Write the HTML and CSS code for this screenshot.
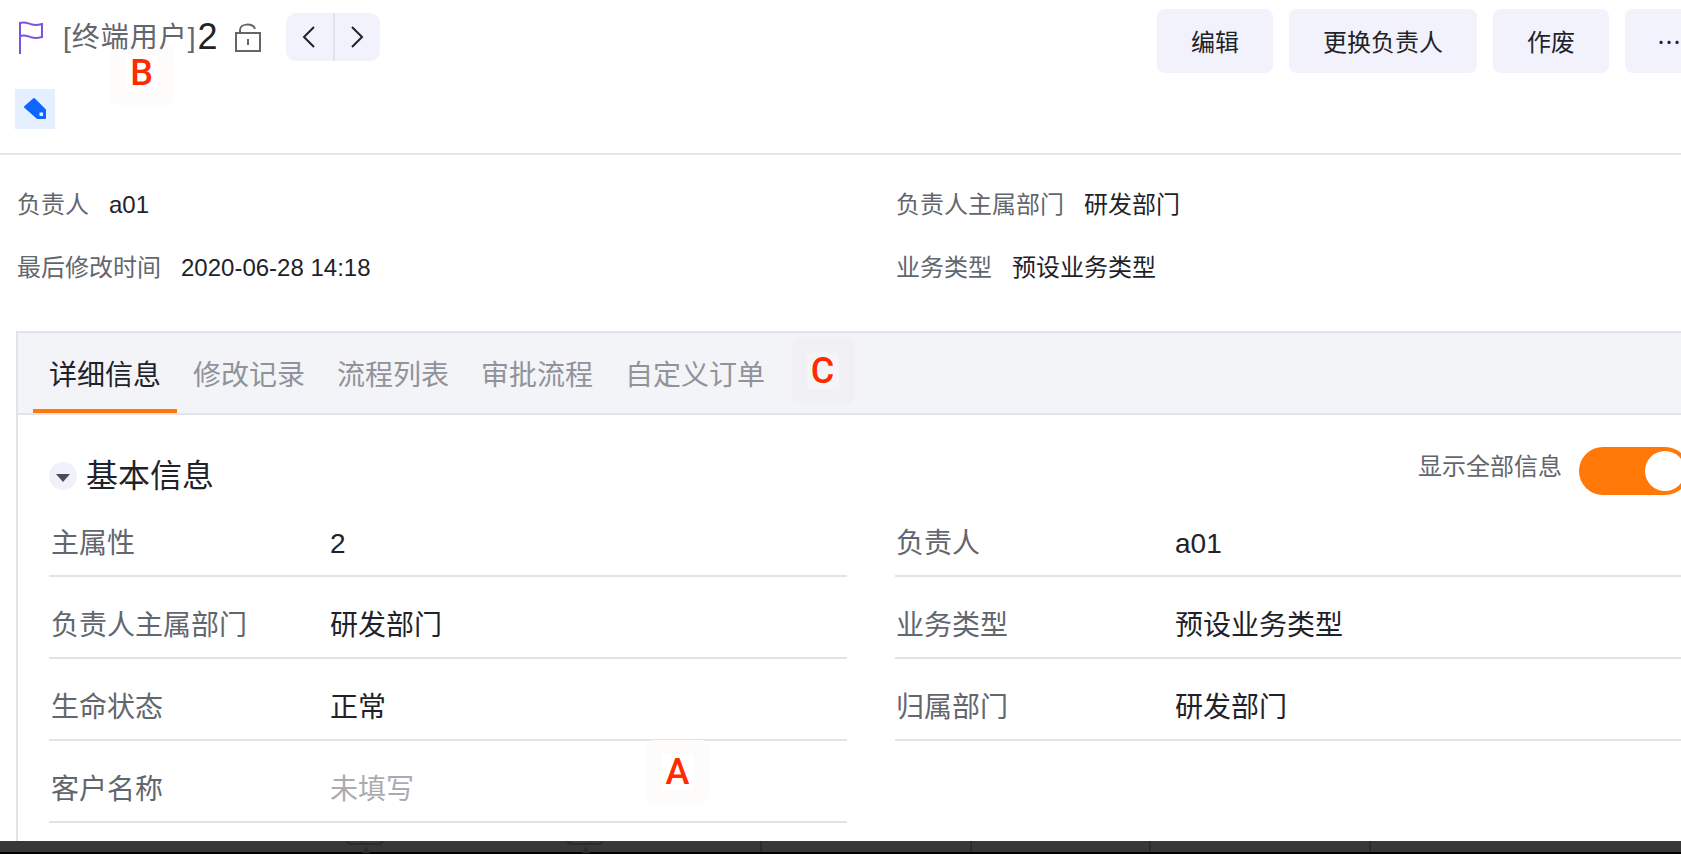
FILE: index.html
```html
<!DOCTYPE html>
<html lang="zh-CN">
  <head>
    <meta charset="UTF-8" />
    <meta name="viewport" content="width=device-width, initial-scale=1.0" />
    <link rel="stylesheet" href="styles.css">
    <title>终端用户</title>
  </head>
  <body>
    <div class="page">
      <div class="main">
        <!-- header -->
        <div class="header">
          <div class="header-left">
            <div class="title-row">
              <svg class="flag" width="26" height="34" viewBox="0 0 26 34" fill="none" stroke="#7b52e0" stroke-width="2">
                <path d="M2 1v32" />
                <path d="M2 2c5-1.500 8 .5 12 1.500 3 .7 6 .5 10-.5v13c-4 1-7 1.200-10 .5-4-1-7-3-12-1.500" />
              </svg>
              <span class="title-text">[终端用户]</span>
              <span class="title-num">2</span>
              <svg class="lock" width="28" height="30" viewBox="0 0 28 30" fill="none" stroke="#62666d" stroke-width="2">
                <rect x="2" y="10" width="24" height="18" />
                <path d="M6 10V7c0-7 13-7 15-1" />
                <path d="M14 16v6" />
              </svg>
              <div class="nav-btns">
                <div class="nav-btn">
                  <svg width="14" height="22" viewBox="0 0 14 22" fill="none" stroke="#1f2329" stroke-width="2"><path d="M12 1 2 11l10 10" /></svg>
                </div>
                <div class="nav-btn nav-btn-next">
                  <svg width="14" height="22" viewBox="0 0 14 22" fill="none" stroke="#1f2329" stroke-width="2"><path d="m2 1 10 10L2 21" /></svg>
                </div>
              </div>
            </div>
            <div class="tag-box">
              <svg width="24" height="24" viewBox="0 0 24 24">
                <path fill="#0d66ff" stroke="#0d66ff" stroke-width="2" stroke-linejoin="round" d="M2 10 11 2l11 11v8h-7.500z" />
                <rect x="16.500" y="15.500" width="3.500" height="3.500" fill="#e5efff" />
              </svg>
            </div>
          </div>
          <div class="actions">
            <button class="btn btn-edit">编辑</button>
            <button class="btn btn-owner">更换负责人</button>
            <button class="btn btn-edit">作废</button>
            <button class="btn btn-more">…</button>
          </div>
        </div>

        <!-- summary -->
        <div class="summary">
          <div class="summary-item"><span class="summary-label">负责人</span><span>a01</span></div>
          <div class="summary-item"><span class="summary-label">负责人主属部门</span><span>研发部门</span></div>
          <div class="summary-item"><span class="summary-label">最后修改时间</span><span>2020-06-28 14:18</span></div>
          <div class="summary-item"><span class="summary-label">业务类型</span><span>预设业务类型</span></div>
        </div>

        <!-- tabs -->
        <div class="panel">
          <div class="tabs">
            <div class="tab active">详细信息</div>
            <div class="tab">修改记录</div>
            <div class="tab">流程列表</div>
            <div class="tab">审批流程</div>
            <div class="tab">自定义订单</div>
          </div>
          <div class="panel-body">
            <div class="section-head">
              <div class="section-title">
                <span class="caret"></span>
                <h3>基本信息</h3>
              </div>
              <div class="show-all">
                <span class="show-all-label">显示全部信息</span>
                <span class="switch"></span>
              </div>
            </div>
            <div class="fields">
              <div class="field"><span class="field-label">主属性</span><span>2</span></div>
              <div class="field"><span class="field-label">负责人</span><span>a01</span></div>
              <div class="field"><span class="field-label">负责人主属部门</span><span>研发部门</span></div>
              <div class="field"><span class="field-label">业务类型</span><span>预设业务类型</span></div>
              <div class="field"><span class="field-label">生命状态</span><span>正常</span></div>
              <div class="field"><span class="field-label">归属部门</span><span>研发部门</span></div>
              <div class="field"><span class="field-label">客户名称</span><span class="empty">未填写</span></div>
            </div>
          </div>
        </div>
      </div>

      <!-- bottom strip -->
      <div class="dock">
        <div class="dock-seg dock-seg-1">
          <span class="dock-mark"></span>
          <span class="dock-mark"></span>
        </div>
        <div class="dock-seg dock-seg-2"></div>
        <div class="dock-seg dock-seg-3"></div>
        <div class="dock-seg dock-seg-4"></div>
      </div>
      <div class="dock-edge"></div>

      <!-- callouts -->
      <div class="callout callout-a"><span>A</span></div>
      <div class="callout callout-b"><span>B</span></div>
      <div class="callout callout-c"><span>C</span></div>
    </div>
  </body>
</html>
```

FILE: styles.css
```css
* {
  box-sizing: border-box;
}
html,
body {
  margin: 0;
  padding: 0;
  background: #fff;
}
body {
  font-family: "Liberation Sans", "Noto Sans CJK SC", sans-serif;
  color: #1f2329;
}
.page {
  position: relative;
  display: flex;
  flex-direction: column;
  width: 1681px;
  height: 854px;
  overflow: hidden;
}
.main {
  height: 841px;
  overflow: hidden;
}

/* Header */
.header {
  display: flex;
  justify-content: space-between;
  width: 1800px;
  height: 155px;
  padding: 9px 0 0 15px;
  border-bottom: 2px solid #e2e4ee;
}
.title-row {
  position: relative;
  z-index: 2;
  display: flex;
  align-items: center;
  height: 48px;
  margin-top: 4px;
}
.flag {
  margin: 2px 0 0 3px;
}
.title-text {
  margin: 2px 0 0 19px;
  font-size: 28px;
  letter-spacing: 1px;
  line-height: 40px;
  color: #62666d;
}
.title-num {
  margin-left: 1px;
  font-size: 36px;
  line-height: 40px;
  color: #1f2329;
}
.lock {
  margin: 1px 0 0 16px;
}
.nav-btns {
  display: flex;
  width: 94px;
  height: 48px;
  margin-left: 24px;
  background: #f1f2fb;
  border-radius: 10px;
}
.nav-btn {
  display: flex;
  align-items: center;
  justify-content: center;
  width: 47px;
  height: 48px;
}
.nav-btn-next {
  border-left: 2px solid #e2e3ea;
}
.tag-box {
  display: flex;
  align-items: center;
  justify-content: center;
  width: 40px;
  height: 40px;
  margin-top: 28px;
  background: #e5efff;
}

/* Buttons */
.actions {
  display: flex;
  gap: 16px;
  position: absolute;
  top: 9px;
  left: 1157px;
}
.btn {
  height: 64px;
  padding: 0 0 2px;
  border: 0;
  border-radius: 8px;
  background: #f1f2fb;
  font-family: inherit;
  font-size: 24px;
  color: #1f2329;
}
.btn-edit {
  width: 116px;
}
.btn-owner {
  width: 188px;
}
.btn-more {
  width: 116px;
  padding-left: 32px;
  font-family: "Noto Sans CJK SC", sans-serif;
  text-align: left;
}

/* Summary */
.summary {
  display: grid;
  grid-template-columns: 879px 1fr;
  align-content: start;
  row-gap: 34px;
  height: 176px;
  padding: 35px 0 0 17px;
}
.summary-item {
  font-size: 24px;
  line-height: 29px;
  white-space: nowrap;
}
.summary-label {
  margin-right: 20px;
  color: #62666d;
}

/* Tabs */
.panel {
  width: 1800px;
  height: 520px;
  margin-left: 16px;
  border-top: 2px solid #e2e3ea;
  border-left: 2px solid #e2e3ea;
}
.tabs {
  display: flex;
  height: 82px;
  padding-left: 15px;
  background: #f3f4f8;
  border-bottom: 2px solid #e2e3ea;
}
.tab {
  width: 144px;
  height: 80px;
  padding-top: 23px;
  font-size: 28px;
  line-height: 40px;
  text-align: center;
  color: #909399;
}
.tab.active {
  color: #1f2329;
  border-bottom: 4px solid #ff7808;
}
.tab:last-child {
  width: 172px;
}

/* Section */
.panel-body {
  padding: 32px 0 0 31px;
}
.section-head {
  display: flex;
  justify-content: space-between;
  width: 1640px;
  height: 48px;
}
.section-title {
  display: flex;
  align-items: center;
  height: 48px;
  margin-top: 5px;
}
.caret {
  display: flex;
  align-items: center;
  justify-content: center;
  width: 28px;
  height: 28px;
  border-radius: 50%;
  background: #f0f1fb;
}
.caret::after {
  content: "";
  margin-top: 4px;
  border-top: 8px solid #4a4d57;
  border-left: 7px solid transparent;
  border-right: 7px solid transparent;
}
h3 {
  margin: 0 0 0 9px;
  font-size: 32px;
  font-weight: 400;
  line-height: 40px;
}
.show-all {
  display: flex;
  align-items: flex-start;
}
.show-all-label {
  font-size: 24px;
  line-height: 40px;
  color: #62666d;
}
.switch {
  position: relative;
  width: 110px;
  height: 48px;
  margin-left: 17px;
  border-radius: 24px;
  background: #ff7808;
}
.switch::after {
  content: "";
  position: absolute;
  top: 4px;
  left: 66px;
  width: 40px;
  height: 40px;
  border-radius: 50%;
  background: #fff;
}

/* Fields */
.fields {
  display: grid;
  grid-template-columns: 798px 798px;
  column-gap: 48px;
}
.field {
  display: flex;
  height: 82px;
  padding: 33px 0 0 2px;
  border-bottom: 2px solid #e2e3ea;
  font-size: 28px;
  line-height: 32px;
}
.field:nth-child(even) {
  padding-left: 1px;
}
.field-label {
  width: 279px;
  color: #62666d;
}
.empty {
  color: #a9abb1;
}

/* Bottom strip */
.dock {
  display: flex;
  height: 11px;
  background: #383838;
}
.dock-edge {
  height: 2px;
  background: #000;
}
.dock-seg {
  display: flex;
  height: 11px;
  border-right: 2px solid #2c2c2c;
}
.dock-seg-1 {
  width: 762px;
  gap: 184px;
  padding-left: 347px;
}
.dock-seg-2 {
  width: 210px;
}
.dock-seg-3 {
  width: 179px;
}
.dock-seg-4 {
  width: 220px;
}
.dock-mark {
  position: relative;
  width: 36px;
  height: 4px;
  border: 2px solid #2c2c2c;
  border-top: 0;
  border-radius: 0 0 18px 18px;
}
.dock-mark::after {
  content: "";
  position: absolute;
  top: 5px;
  left: 13px;
  border-bottom: 7px solid #2c2c2c;
  border-left: 4px solid transparent;
  border-right: 4px solid transparent;
}

/* Callouts */
.callout {
  position: absolute;
  display: flex;
  align-items: center;
  justify-content: center;
  width: 63px;
  height: 64px;
  border-radius: 8px;
  background: #fdfcfb;
}
.callout span {
  display: block;
  width: 32px;
  height: 36px;
  background: #fff;
  font-family: Roboto, "Liberation Sans", sans-serif;
  font-size: 36px;
  font-weight: 500;
  line-height: 36px;
  text-align: center;
  color: #ff2a00;
}
.callout-a {
  top: 740px;
  left: 646px;
}
.callout-b {
  top: 41px;
  left: 110px;
}
.callout-c {
  top: 337px;
  left: 792px;
  height: 67px;
  background: #f1f1f5;
}
.callout-c span {
  margin-right: 2px;
  background: #f5f5f8;
}
```
